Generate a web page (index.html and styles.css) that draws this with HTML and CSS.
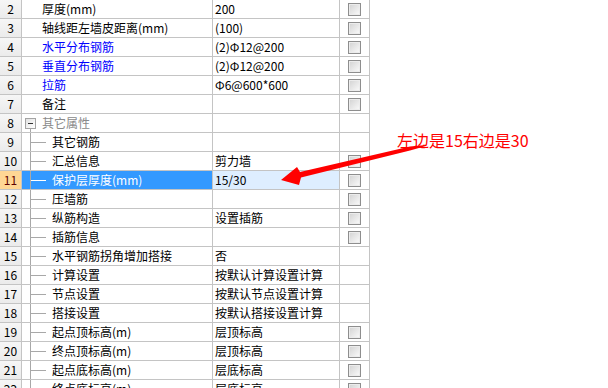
FILE: index.html
```html
<!DOCTYPE html>
<html lang="zh-CN">
<head>
<meta charset="utf-8">
<title>属性编辑</title>
<link rel="stylesheet" href="styles.css">
</head>
<body>
<div class="page">
  <div class="grid">
    <div class="row"><div class="num">2</div><div class="name">厚度(mm)</div><div class="val">200</div><div class="chk"><span class="box"></span></div></div>
    <div class="row"><div class="num">3</div><div class="name">轴线距左墙皮距离(mm)</div><div class="val">(100)</div><div class="chk"><span class="box"></span></div></div>
    <div class="row"><div class="num">4</div><div class="name blue">水平分布钢筋</div><div class="val">(2)Φ12@200</div><div class="chk"><span class="box"></span></div></div>
    <div class="row"><div class="num">5</div><div class="name blue">垂直分布钢筋</div><div class="val">(2)Φ12@200</div><div class="chk"><span class="box"></span></div></div>
    <div class="row"><div class="num">6</div><div class="name blue">拉筋</div><div class="val">Φ6@600*600</div><div class="chk"><span class="box"></span></div></div>
    <div class="row"><div class="num">7</div><div class="name">备注</div><div class="val"></div><div class="chk"><span class="box"></span></div></div>
    <div class="row"><div class="num">8</div><div class="name group"><span class="toggle"></span>其它属性</div><div class="val"></div><div class="chk"></div></div>
    <div class="row"><div class="num">9</div><div class="name tree"><span class="branch"></span>其它钢筋</div><div class="val"></div><div class="chk"></div></div>
    <div class="row"><div class="num">10</div><div class="name tree"><span class="branch"></span>汇总信息</div><div class="val">剪力墙</div><div class="chk"><span class="box"></span></div></div>
    <div class="row sel"><div class="num">11</div><div class="name tree"><span class="branch"></span>保护层厚度(mm)</div><div class="val">15/30</div><div class="chk"><span class="box"></span></div></div>
    <div class="row"><div class="num">12</div><div class="name tree"><span class="branch"></span>压墙筋</div><div class="val"></div><div class="chk"><span class="box"></span></div></div>
    <div class="row"><div class="num">13</div><div class="name tree"><span class="branch"></span>纵筋构造</div><div class="val">设置插筋</div><div class="chk"><span class="box"></span></div></div>
    <div class="row"><div class="num">14</div><div class="name tree"><span class="branch"></span>插筋信息</div><div class="val"></div><div class="chk"><span class="box"></span></div></div>
    <div class="row"><div class="num">15</div><div class="name tree"><span class="branch"></span>水平钢筋拐角增加搭接</div><div class="val">否</div><div class="chk"></div></div>
    <div class="row"><div class="num">16</div><div class="name tree"><span class="branch"></span>计算设置</div><div class="val">按默认计算设置计算</div><div class="chk"></div></div>
    <div class="row"><div class="num">17</div><div class="name tree"><span class="branch"></span>节点设置</div><div class="val">按默认节点设置计算</div><div class="chk"></div></div>
    <div class="row"><div class="num">18</div><div class="name tree"><span class="branch"></span>搭接设置</div><div class="val">按默认搭接设置计算</div><div class="chk"></div></div>
    <div class="row"><div class="num">19</div><div class="name tree"><span class="branch"></span>起点顶标高(m)</div><div class="val">层顶标高</div><div class="chk"><span class="box"></span></div></div>
    <div class="row"><div class="num">20</div><div class="name tree"><span class="branch"></span>终点顶标高(m)</div><div class="val">层顶标高</div><div class="chk"><span class="box"></span></div></div>
    <div class="row"><div class="num">21</div><div class="name tree"><span class="branch"></span>起点底标高(m)</div><div class="val">层底标高</div><div class="chk"><span class="box"></span></div></div>
    <div class="row"><div class="num">22</div><div class="name tree"><span class="branch"></span>终点底标高(m)</div><div class="val">层底标高</div><div class="chk"><span class="box"></span></div></div>
  </div>

  <div class="note">左边是15右边是30</div>
  <svg class="arrow" width="608" height="388" viewBox="0 0 608 388" aria-hidden="true">
    <polygon fill="#ff0000" points="281,180 297,167 300,172 410,146.5 426,145 426,146 410,150.5 301,177.5 299,185"/>
  </svg>
</div>
</body>
</html>
```

FILE: styles.css
```css
html, body {
  margin: 0;
  padding: 0;
  background: #ffffff;
}

body {
  font-family: "Noto Sans CJK SC", "Noto Sans", sans-serif;
  font-size: 12px;
  color: #000000;
}

.page {
  position: relative;
  width: 608px;
  height: 388px;
  overflow: hidden;
}

.grid {
  width: 370px;
}

.row {
  display: grid;
  grid-template-columns: 22px 191px 127px 30px;
  height: 19px;
  border-bottom: 1px solid #c4c4c4;
  box-sizing: border-box;
  line-height: 18px;
  white-space: nowrap;
}

.row > div {
  border-right: 1px solid #c4c4c4;
  box-sizing: border-box;
  height: 18px;
  overflow: hidden;
}

.num {
  background: linear-gradient(#f6f6f6, #ebebeb);
  text-align: center;
  color: #000;
}

.name {
  display: flex;
  align-items: center;
  padding-left: 20px;
}

.name.blue {
  color: #0000ff;
}

.name.group {
  padding-left: 3px;
  color: #8a8a8a;
  background: linear-gradient(#a8a8a8, #a8a8a8) no-repeat 8px 14px / 1px 4px;
}

.toggle {
  width: 11px;
  height: 11px;
  box-sizing: border-box;
  border: 1px solid #a4a4a4;
  margin-right: 6px;
  background:
    linear-gradient(#333333, #333333) no-repeat center / 5px 1px,
    linear-gradient(135deg, #e2e2e2, #ffffff);
}

.name.tree {
  padding-left: 8px;
}

.branch {
  width: 16px;
  height: 18px;
  box-sizing: border-box;
  border-left: 1px solid #a8a8a8;
  margin-right: 6px;
  background: linear-gradient(#a8a8a8, #a8a8a8) no-repeat 0 9px / 15px 1px;
  flex: none;
}

.val {
  padding-left: 2px;
}

.chk {
  padding-left: 8px;
  padding-top: 3px;
}

.box {
  display: block;
  width: 13px;
  height: 13px;
  box-sizing: border-box;
  border: 1px solid #8e8e8e;
  box-shadow: inset 0 0 0 1px #ececec;
  background: linear-gradient(135deg, #d2d2d2, #fbfbfb);
}

.row.sel .num {
  background: #ffd694;
  color: #600000;
}

.row.sel .name {
  background-color: #3399ff;
  color: #ffffff;
}

.row.sel .branch {
  background-image: linear-gradient(#ffffff, #ffffff);
}

.row.sel .val {
  background: #deeeff;
}

.note {
  position: absolute;
  left: 397px;
  top: 131px;
  font-size: 16px;
  line-height: 18px;
  color: #ff0000;
  white-space: nowrap;
}

.arrow {
  position: absolute;
  left: 0;
  top: 0;
  pointer-events: none;
}
```
